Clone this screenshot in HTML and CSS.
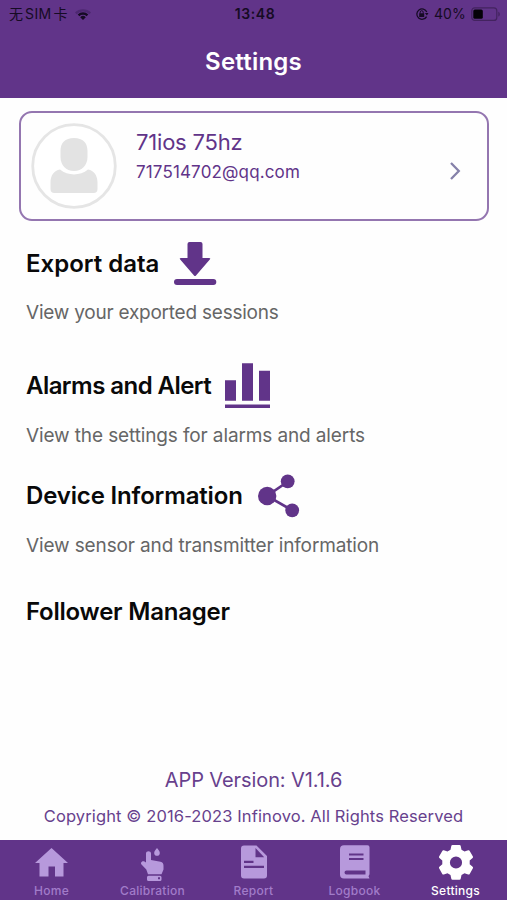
FILE: index.html
```html
<!DOCTYPE html>
<html lang="en">
<head>
<meta charset="utf-8">
<title>Settings</title>
<link rel="stylesheet" href="styles.css">
</head>
<body>
<div class="app">
  <header class="header">
    <div class="status">
      <div class="status-left">
        <span class="carrier">无<span class="sim">SIM</span>卡</span>
        <svg class="wifi" width="18" height="13" viewBox="0 0 18 13"><path class="faint" d="M1 4.600a11.500 11.500 0 0 1 16 0l-1.600 1.600a9.200 9.200 0 0 0-12.800 0z"/><path d="M3.700 6.400a7.800 7.800 0 0 1 10.600 0l-1.700 1.800a5.300 5.300 0 0 0-7.200 0zM6.200 9.200a4 4 0 0 1 5.600 0L9 12z"/></svg>
      </div>
      <span class="time">13:48</span>
      <div class="status-right">
        <svg width="14" height="14" viewBox="0 0 14 14"><path d="M11.600 9.600A5.200 5.200 0 1 1 11.800 5" fill="none" stroke="#160b24" stroke-width="1.300"/><path d="M9.900 6.100h3.600L11.900 8.600zM4.200 6.300h5v3.600h-5z"/><path d="M5.200 6.500V5.200a1.500 1.500 0 0 1 3 0v1.300" fill="none" stroke="#160b24"/></svg>
        <span class="percent">40%</span>
        <svg width="30" height="15" viewBox="0 0 30 15"><rect x=".8" y=".8" width="25" height="12.600" rx="3" fill="none" stroke="#43235f" stroke-width="1.200"/><rect class="level" x="2.300" y="2.400" width="9.500" height="9.400" rx="1.600"/><path d="M27.300 4.700c2 .6 2 4.200 0 4.800z" fill="#43235f"/></svg>
      </div>
    </div>
    <h1 class="title">Settings</h1>
  </header>

  <main class="content">
    <section class="profile">
      <svg class="avatar" width="86" height="86" viewBox="0 0 86 86"><circle cx="43" cy="43" r="41.300" fill="#fff" stroke="#e5e5e5" stroke-width="2.800"/><path d="M43 15c9 0 13.500 5 13.500 13v6c0 8-5.500 14-13.500 14s-13.500-6-13.500-14v-6c0-8 4.500-13 13.500-13zM29 46.500c8 6.500 20 6.500 28 0 6 1 9.500 6 9.500 13V66q0 4-4 4h-39q-4 0-4-4v-6.500c0-7 3.500-12 9.500-13z" fill="#e3e3e3"/></svg>
      <div class="identity">
        <div class="name">71ios 75hz</div>
        <div class="email">717514702@qq.com</div>
      </div>
      <svg class="chevron" width="12" height="20" viewBox="0 0 12 20"><path d="M2 2l7.800 8L2 18" fill="none" stroke="#8581a9" stroke-width="2.300"/></svg>
    </section>

    <section class="item export">
      <div class="row"><h2 class="t-export">Export data</h2>
        <svg class="i-export" width="44" height="44" viewBox="0 0 44 44"><path d="M16.500 0h11q2 0 2 2v14h6.500q2 0 .8 1.500L23 33.500q-1 1-2 0L7.200 17.500Q6 16 8 16h6.500V2q0-2 2-2z"/><rect x="1" y="37" width="42.300" height="6" rx="3"/></svg></div>
      <p class="d-export">View your exported sessions</p>
    </section>
    <section class="item alarms">
      <div class="row"><h2 class="t-alarms">Alarms and Alert</h2>
        <svg class="i-alarms" width="47" height="47" viewBox="0 0 47 47"><path d="M1 18.300h11v20.500H1zM18 1.300h11v37.500H18zM35 8.800h11v30H35zM1 42.500h45v3.600H1z"/></svg></div>
      <p class="d-alarms">View the settings for alarms and alerts</p>
    </section>
    <section class="item device">
      <div class="row"><h2 class="t-device">Device Information</h2>
        <svg class="i-device" width="42" height="44" viewBox="0 0 42 44"><path d="M30 7.500L9 22l25.500 14.500" fill="none" stroke="#613489" stroke-width="2.700"/><circle cx="9.200" cy="22" r="9.200"/><circle cx="29.700" cy="7.300" r="6.900"/><circle cx="34.200" cy="36.300" r="6.900"/></svg></div>
      <p class="d-device">View sensor and transmitter information</p>
    </section>
    <section class="item follower">
      <div class="row"><h2 class="t-follower">Follower Manager</h2></div>
    </section>
    <footer class="about">
      <div class="version">APP Version: V1.1.6</div>
      <div class="copyright">Copyright © 2016-2023 Infinovo. All Rights Reserved</div>
    </footer>
  </main>

  <nav class="tabs">
    <div class="tab"><svg width="36" height="36" viewBox="0 0 36 36"><path d="M17.500 4L34 19h-4.500v13.500H21V22.500h-6.500v10H5.500V19H1z"/></svg><span class="l-home">Home</span></div>
    <div class="tab"><svg width="36" height="36" viewBox="0 0 36 36"><path fill-rule="evenodd" d="M11 9.500c0-3 5-3 5 0v6.500l9.500 1.700q3 .7 3 4v3.800L26.500 30.300H13L11.300 25.500l-4.800-5c-1.400-2 .8-4.200 3-3l1.500 1zM22 4c1.800 2.200 2.800 3.500 2.800 4.900a2.800 2.800 0 0 1-5.600 0c0-1.400 1-2.700 2.800-4.900zM13.500 31.700h11.500q1.500 0 1.500 1.500v2.300q0 1.500-1.500 1.500H13.500q-1.500 0-1.500-1.500v-2.300q0-1.500 1.500-1.500zM23 33.300v2h2v-2z"/></svg><span class="l-calibration">Calibration</span></div>
    <div class="tab"><svg width="36" height="36" viewBox="0 0 36 36"><path fill-rule="evenodd" d="M8 1.500h12.500L31 12v19.500q0 3-3 3H8q-3 0-3-3v-27q0-3 3-3zM19.500 4v9.200h8.700zM8 16.700v2.200h9.500v-2.200zm0 5v2.400h20v-2.400z"/></svg><span class="l-report">Report</span></div>
    <div class="tab"><svg width="36" height="36" viewBox="0 0 36 36"><path fill-rule="evenodd" d="M7 1.200h23.500q2 0 2 2v27l-1 2 1 2.300H7q-4 0-4-4V5.200q0-4 4-4zM12 9.500v2h14.500v-2zm0 4.500v2h14.500v-2zM9.500 26.500q-2 0-2 2t2 2h19v-4z"/></svg><span class="l-logbook">Logbook</span></div>
    <div class="tab active"><svg width="36" height="36" viewBox="0 0 36 36"><path fill-rule="evenodd" d="M14.500 1h7q1 0 1.200 1l.8 3.800 3 1.700 3.700-1.200q1-.3 1.500.6l3.200 5.600q.5.800-.3 1.500l-2.900 2.600v3.600l2.900 2.600q.8.700.3 1.500l-3.200 5.600q-.5.900-1.500.6l-3.700-1.200-3 1.700-.8 3.800q-.2 1-1.200 1h-7q-1 0-1.200-1l-.8-3.800-3-1.700-3.700 1.200q-1 .3-1.500-.6l-3.200-5.600q-.5-.8.300-1.500l2.900-2.600v-3.600l-2.900-2.600q-.8-.7-.3-1.500l3.200-5.600q.5-.9 1.500-.6l3.700 1.200 3-1.700.8-3.800q.2-1 1.200-1zM18 12.400a6.100 6.100 0 1 0 0 12.200 6.100 6.100 0 0 0 0-12.200z"/></svg><span class="l-settings">Settings</span></div>
  </nav>
</div>
</body>
</html>
```
FILE: styles.css
```css
* { box-sizing: border-box; }
body { margin: 0; font-family: Inter, "Noto Sans CJK SC", sans-serif; background: #fefefe; }
h1, h2, p { margin: 0; white-space: nowrap; }
svg { display: block; flex: none; overflow: visible; }
.app { width: 507px; height: 900px; display: flex; flex-direction: column; overflow: hidden; }
.header { height: 98px; flex: none; background: #613489; }
.status { height: 28px; padding: 0 6px 0 9px; display: grid; grid-template-columns: 1fr auto 1fr; align-items: center; color: #160b24; fill: #160b24; font-size: 14px; line-height: 20px; }
.status-left, .status-right { display: flex; align-items: center; }
.status-left { gap: 6px; }
.status-right { justify-content: flex-end; gap: 5px; }
.carrier { font-size: 14px; display: flex; gap: 2px; }
.sim { font-size: 14px; letter-spacing: .4px; }
.faint { fill: #4d2871; }
.level { fill: #050208; }
.time { font-weight: 600; letter-spacing: .6px; }
.percent { letter-spacing: .15px; }
.title { margin-top: 18px; text-align: center; color: #fff; font-size: 24px; line-height: 32px; font-weight: 600; letter-spacing: .2px; }
.content { flex: 1; display: flex; flex-direction: column; }
.profile { margin: 13px 18px 0 19px; height: 110px; flex: none; display: flex; border: 2px solid #9476b0; border-radius: 13px; padding: 10px 0 0 10px; }
.avatar { margin-top: 0; }
.identity { margin-left: 19px; flex: 1; color: #613489; white-space: nowrap; }
.name { margin-top: 4px; font-size: 22px; line-height: 30px; letter-spacing: -.2px; }
.email { margin-top: 4px; font-size: 17px; line-height: 23px; letter-spacing: .15px; }
.chevron { margin: 38px 26px 0 0; }
.item { flex: none; padding-left: 26px; }
.row { display: flex; align-items: center; height: 48px; fill: #613489; }
.item h2 { font-size: 24px; line-height: 32px; font-weight: 600; color: #090909; }
.item p { margin-top: 13px; color: #666; font-size: 19px; line-height: 26px; }
.export { height: 122px; padding-top: 19px; }
.export p { margin-top: 12px; }
.alarms { height: 110px; padding-top: 19px; }
.device { height: 116px; padding-top: 19px; }
.follower { padding-top: 19px; }
.t-alarms { letter-spacing: -.55px; }
.t-device { letter-spacing: -.16px; }
.t-follower { letter-spacing: -.23px; }
.d-export { letter-spacing: -.23px; }
.d-alarms { letter-spacing: -.12px; }
.d-device { letter-spacing: -.13px; }
.i-export { margin-left: 14px; }
.i-alarms { margin: -1px 0 0 13px; }
.i-device { margin-left: 15px; }
.about { margin-top: auto; padding-bottom: 13px; text-align: center; color: #67418d; white-space: nowrap; }
.version { font-size: 20px; line-height: 28px; letter-spacing: -.1px; }
.copyright { margin-top: 11px; font-size: 16.500px; line-height: 22px; letter-spacing: .12px; }
.tabs { height: 60px; flex: none; padding-left: 1px; display: grid; grid-template-columns: repeat(5, 101px); background: #613489; color: #a27cc9; fill: #b799dc; }
.tab { display: flex; flex-direction: column; align-items: center; padding-top: 4px; font-size: 12px; line-height: 16px; font-weight: 500; }
.tab span { margin-top: 3px; letter-spacing: .25px; }
.active { color: #fff; fill: #fff; }
```
